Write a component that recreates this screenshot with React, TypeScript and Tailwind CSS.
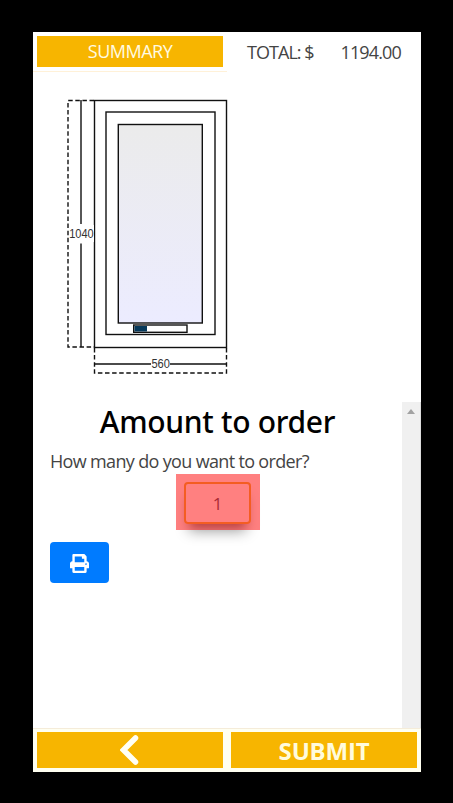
import { FaPrint } from "react-icons/fa";

function WindowDrawing() {
  return (
    <svg width="210" height="290" viewBox="50 90 210 290" className="block" fill="none" stroke="#111" strokeWidth="1.4">
      <defs>
        <linearGradient id="glass" x1="0" y1="0" x2="0" y2="1">
          <stop offset="0" stopColor="#ebebeb" />
          <stop offset="1" stopColor="#ececff" />
        </linearGradient>
      </defs>
      <path d="M94 100.5H68V347H94" strokeDasharray="4.5 2.6" />
      <path d="M94.500 348V373H226.500V348" strokeDasharray="4.5 2.6" />
      <path d="M81 100V224M81 243.500V347M95 364H151M170 364H226" />
      <rect x="94.500" y="100.500" width="132" height="247" fill="#fff" />
      <rect x="106" y="112" width="109" height="222.500" />
      <rect x="118.300" y="124.500" width="84" height="198.500" fill="url(#glass)" />
      <rect x="133.700" y="325" width="53.300" height="7.300" fill="#fff" />
      <rect x="134.500" y="326" width="12.500" height="5.500" fill="#06385a" stroke="none" />
      <rect x="69" y="225" width="25" height="17" fill="#fff" stroke="none" />
      <g fill="#333" stroke="none" fontSize="12.500" textAnchor="middle" fontFamily="'Liberation Sans', sans-serif">
        <text x="81.500" y="238" textLength="24.500" lengthAdjust="spacingAndGlyphs">1040</text>
        <text x="160.700" y="368" textLength="18.500" lengthAdjust="spacingAndGlyphs">560</text>
      </g>
    </svg>
  );
}

export default function App() {
  return (
    <div className="h-[803px] w-[453px] bg-black pl-[33px] pt-8 font-['Open_Sans',sans-serif]">
      <main className="flex h-[740px] w-[388px] flex-col bg-white">
        <header className="flex h-10 shrink-0 text-[18px] leading-[31px]">
          <div className="h-10 w-[194px] border-b border-[#fff1d8] px-1 pt-1">
            <button className="block h-[31px] w-[186px] bg-[#f7b500] text-center tracking-[-0.5px] text-[#fffbe4]">
              SUMMARY
            </button>
          </div>
          <div className="flex flex-1 justify-between pl-5 pr-5 pt-[5px] text-[#444]">
            <span className="tracking-[-0.95px]">TOTAL: $</span>
            <span className="tracking-[-0.85px]">1194.00</span>
          </div>
        </header>
        <section className="h-[330px] shrink-0 pl-[17px] pt-[18px]">
          <WindowDrawing />
        </section>
        <div className="flex min-h-0 flex-1">
          <section className="flex-1 pl-[17px]">
            <h1 className="-ml-[17px] h-[46px] text-center font-['Noto_Sans',sans-serif] text-[30px] font-medium leading-[40px] tracking-[-0.3px] text-black">
              Amount to order
            </h1>
            <p className="h-[26px] whitespace-nowrap text-[18px] leading-[27px] tracking-[-0.66px] text-[#444]">
              How many do you want to order?
            </p>
            <div className="relative ml-[126px] h-14 w-[84px]">
              <div className="absolute left-2 top-2 h-[42px] w-[67px] rounded bg-white shadow-[0_12px_14px_-5px_rgba(0,0,0,0.4)]" />
              <div className="absolute inset-0 overflow-hidden bg-[#ff8080]">
                <div className="absolute left-2 top-2 h-[42px] w-[67px] rounded shadow-[0_10px_12px_-5px_rgba(110,0,0,0.5)]" />
                <div className="absolute left-2 top-2 h-[42px] w-[67px] rounded border-2 border-[#f45d22] bg-[#ff8080] text-center text-[17px] leading-[40px] text-[#a92a35]">
                  1
                </div>
              </div>
            </div>
            <button className="mt-3 flex h-[41px] w-[59px] items-center justify-center rounded bg-[#007bff] pt-[2px] text-white">
              <FaPrint size={19} />
            </button>
          </section>
          <div className="flex w-[19px] justify-center border-r border-[#ddd] bg-[#f0f0f0] pt-[7px]">
            <svg width="8" height="5" viewBox="0 0 8 5">
              <path d="M0 5L4 0L8 5Z" fill="#a2a2a2" />
            </svg>
          </div>
        </div>
        <footer className="flex h-11 shrink-0 gap-2 border-t border-[#f5ecd9] bg-[#fffff1] px-1 pt-[3px]">
          <button className="flex h-9 w-[186px] items-center justify-center bg-[#f7b500]">
            <svg width="20" height="32" viewBox="0 0 20 32" fill="none" stroke="#fffff4" strokeWidth="5.500" strokeLinecap="round">
              <path d="M15.500 4L3.500 16L15.500 28" />
            </svg>
          </button>
          <button className="h-9 w-[186px] bg-[#f7b500] text-center text-[24px] font-bold leading-[37px] tracking-[-0.2px] text-[#fffbdc]">
            SUBMIT
          </button>
        </footer>
      </main>
    </div>
  );
}
